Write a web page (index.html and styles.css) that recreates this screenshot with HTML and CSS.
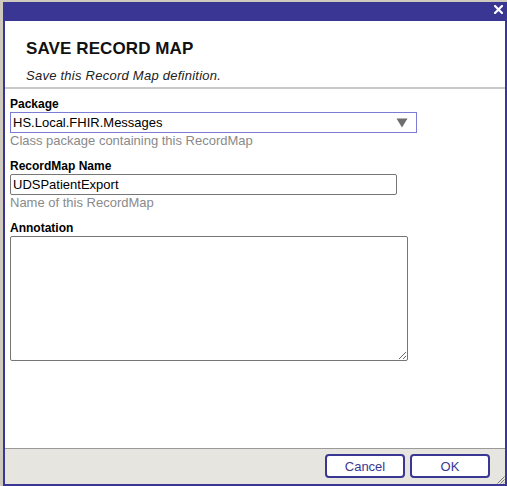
FILE: index.html
```html
<!DOCTYPE html>
<html>
<head>
<meta charset="utf-8">
<link rel="stylesheet" href="styles.css">
</head>
<body>
<div class="dialog">
  <div class="titlebar">
    <svg class="close" width="9" height="9" viewBox="0 0 9 9"><path d="M1 1L8 8M8 1L1 8" stroke="#fff" stroke-width="2.2" stroke-linecap="square"/></svg>
  </div>
  <div class="header">
    <h1 class="title">SAVE RECORD MAP</h1>
    <p class="subtitle">Save this Record Map definition.</p>
  </div>
  <div class="form">
    <div class="group">
      <div class="label">Package</div>
      <div class="select">
        <span>HS.Local.FHIR.Messages</span>
        <svg width="12" height="10" viewBox="0 0 12 10"><path d="M0.5 0.5H11.5L6 9.5Z" fill="#6e6e6e"/></svg>
      </div>
      <div class="hint">Class package containing this RecordMap</div>
    </div>
    <div class="group">
      <div class="label">RecordMap Name</div>
      <input class="input" type="text" value="UDSPatientExport">
      <div class="hint">Name of this RecordMap</div>
    </div>
    <div class="group">
      <div class="label">Annotation</div>
      <textarea class="textarea"></textarea>
    </div>
  </div>
  <div class="footer">
    <button class="btn">Cancel</button>
    <button class="btn">OK</button>
    <svg class="grip" width="9" height="9" viewBox="0 0 9 9"><path d="M8.5 1.5L1.5 8.5M8.5 4.5L4.5 8.5M8.5 7.5L7.5 8.5" stroke="#777" stroke-width="1"/></svg>
  </div>
</div>
</body>
</html>
```
FILE: styles.css
```css
* { box-sizing: border-box; }
html, body { margin: 0; padding: 0; }
body {
  background: #cfcabd;
  padding: 2px 0 0 3px;
  font-family: "Liberation Sans", Arial, sans-serif;
  height: 486px;
  overflow: hidden;
}
.dialog {
  width: 504px;
  height: 484px;
  border: 2px solid #3a3794;
  border-top: none;
  background: #fff;
  display: flex;
  flex-direction: column;
}
.titlebar {
  height: 19px;
  background: #3a3794;
  display: flex;
  justify-content: flex-end;
  align-items: flex-start;
  padding: 3px 2px 0 0;
  flex: none;
}
.close { display: block; }
.header {
  padding: 18px 21px 0 21px;
  height: 68px;
  border-bottom: 2px solid #c9c9c9;
  flex: none;
}
.title {
  margin: 0;
  font-size: 17px;
  line-height: 20px;
  font-weight: bold;
  letter-spacing: 0.1px;
  color: #111;
}
.subtitle {
  margin: 9px 0 0 0;
  font-size: 13px;
  line-height: 15px;
  font-style: italic;
  letter-spacing: 0.25px;
  color: #222;
}
.form {
  flex: 1;
  padding: 8px 5px 0 5px;
}
.group + .group { margin-top: 11px; }
.label {
  font-size: 12px;
  line-height: 14px;
  font-weight: bold;
  color: #000;
}
.select {
  margin-top: 1px;
  width: 407px;
  height: 21px;
  border: 1px solid #7c7cd6;
  display: flex;
  align-items: center;
  justify-content: space-between;
  padding: 0 8px 0 2px;
  font-size: 13px;
  color: #000;
}
.select svg { display: block; }
.hint {
  font-size: 13px;
  line-height: 15px;
  color: #8a8a8a;
}
.input {
  display: block;
  margin: 1px 0 0 0;
  width: 387px;
  height: 21px;
  border: 1px solid #767676;
  border-radius: 2px;
  padding: 1px 2px;
  font-family: "Liberation Sans", Arial, sans-serif;
  font-size: 13px;
  color: #000;
  outline: none;
}
.textarea {
  display: block;
  margin: 1px 0 0 0;
  width: 398px;
  height: 125px;
  border: 1px solid #767676;
  border-radius: 2px;
  padding: 2px;
  font-family: "Liberation Sans", Arial, sans-serif;
  font-size: 13px;
  resize: both;
  outline: none;
}
.footer {
  position: relative;
  flex: none;
  height: 36px;
  border-top: 1px solid #9a9a9a;
  background: #e7e5e0;
  display: flex;
  justify-content: flex-end;
  align-items: flex-start;
  gap: 5px;
  padding: 5px 15px 0 0;
}
.btn {
  width: 80px;
  height: 24px;
  border: 2px solid #3a3794;
  border-radius: 4px;
  background: #fff;
  color: #3a3794;
  font-family: "Liberation Sans", Arial, sans-serif;
  font-size: 13px;
  padding: 0;
}
.grip {
  position: absolute;
  right: 0;
  bottom: 0;
  display: block;
}
```
